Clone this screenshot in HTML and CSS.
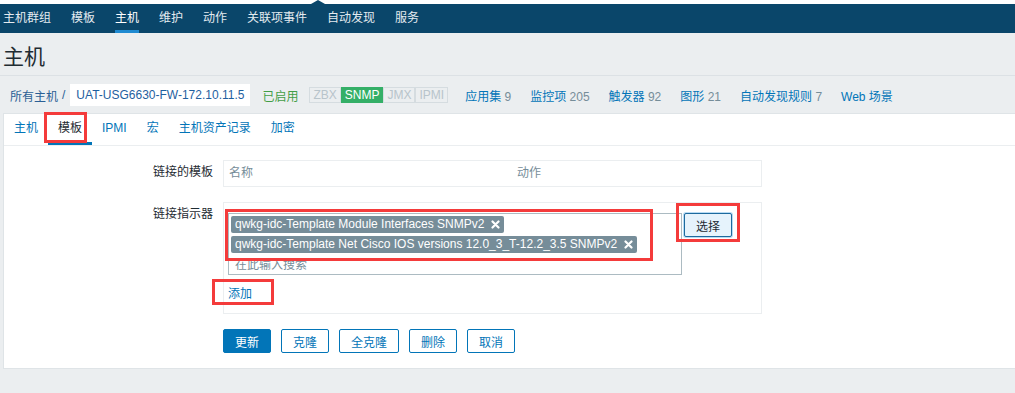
FILE: index.html
```html
<!DOCTYPE html>
<html>
<head>
  <title>主机</title>
  <link rel="stylesheet" href="styles.css">
</head>
<body>
  <nav class="topbar">
    <ul class="top-nav">
      <li>主机群组</li>
      <li>模板</li>
      <li class="selected">主机</li>
      <li>维护</li>
      <li>动作</li>
      <li>关联项事件</li>
      <li>自动发现</li>
      <li>服务</li>
    </ul>
  </nav>

  <header class="page-header">
    <h1>主机</h1>
  </header>

  <!-- host breadcrumbs and related objects -->
  <div class="host-bar">
    <a class="crumb">所有主机</a>
    <span class="sep">/</span>
    <span class="crumb-current">UAT-USG6630-FW-172.10.11.5</span>
    <span class="status-on">已启用</span>
    <span class="avail">
      <span class="avail-item">ZBX</span>
      <span class="avail-item on">SNMP</span>
      <span class="avail-item">JMX</span>
      <span class="avail-item">IPMI</span>
    </span>
    <ul class="host-links">
      <li><a>应用集</a> <span class="count">9</span></li>
      <li><a>监控项</a> <span class="count">205</span></li>
      <li><a>触发器</a> <span class="count">92</span></li>
      <li><a>图形</a> <span class="count">21</span></li>
      <li><a>自动发现规则</a> <span class="count">7</span></li>
      <li><a>Web 场景</a></li>
    </ul>
  </div>

  <main class="panel">
    <ul class="tabs">
      <li>主机</li>
      <li class="active">模板</li>
      <li>IPMI</li>
      <li>宏</li>
      <li>主机资产记录</li>
      <li>加密</li>
    </ul>

    <div class="form">
      <label class="form-label">链接的模板</label>
      <div class="linked-table">
        <span class="col-name">名称</span>
        <span>动作</span>
      </div>

      <label class="form-label">链接指示器</label>
      <div class="link-box">
        <div class="ms-row">
          <div class="multiselect">
            <span class="chip">qwkg-idc-Template Module Interfaces SNMPv2
              <svg class="chip-x" width="9" height="9" viewBox="0 0 9 9"><path d="M1.5 1.5L7.5 7.5M7.5 1.5L1.5 7.5" stroke="#fff" stroke-width="2.2" stroke-linecap="round"/></svg>
            </span>
            <span class="chip">qwkg-idc-Template Net Cisco IOS versions 12.0_3_T-12.2_3.5 SNMPv2
              <svg class="chip-x" width="9" height="9" viewBox="0 0 9 9"><path d="M1.5 1.5L7.5 7.5M7.5 1.5L1.5 7.5" stroke="#fff" stroke-width="2.2" stroke-linecap="round"/></svg>
            </span>
            <span class="ms-input">在此输入搜索</span>
          </div>
          <button class="btn-select">选择</button>
        </div>
        <a class="add-link">添加</a>
      </div>

      <div class="form-buttons">
        <button class="btn btn-main">更新</button>
        <button class="btn">克隆</button>
        <button class="btn">全克隆</button>
        <button class="btn">删除</button>
        <button class="btn">取消</button>
      </div>
    </div>

    <!-- red annotation frames -->
    <span class="mark mark-tab"></span>
    <span class="mark mark-chips"></span>
    <span class="mark mark-select"></span>
    <span class="mark mark-add"></span>
  </main>
</body>
</html>
```

FILE: styles.css
```css
:root {
  --nav-bg: #0a466a;
  --page-bg: #ebeef0;
  --link: #0275b8;
  --text: #1f2c33;
  --muted: #768d99;
  --line: #dfe4e7;
  --mark: #f43b3b;
}

body {
  margin: 0;
  background-color: var(--page-bg);
  font-family: "Liberation Sans", "Noto Sans CJK SC", sans-serif;
  font-size: 12px;
  color: var(--text);
}

ul {
  list-style: none;
  margin: 0;
  padding: 0;
}

/* Top navigation */
.topbar {
  position: relative;
  border-top: 4px solid #ffffff;
  background-color: var(--nav-bg);
  height: 29px;
}

.topbar::before {
  content: "";
  position: absolute;
  top: -4px;
  left: 311px;
  border-left: 7px solid transparent;
  border-right: 7px solid transparent;
  border-bottom: 4px solid var(--nav-bg);
}

.top-nav {
  display: flex;
  padding-left: 3px;
}

.top-nav li {
  margin-right: 20px;
  padding-top: 3px;
  line-height: 23px;
  border-bottom: 3px solid transparent;
  color: #e4ebf0;
}

.top-nav li.selected {
  color: #ffffff;
  border-bottom-color: #1f8ad1;
}

/* Page title */
.page-header {
  padding: 12px 0 6px 3px;
  border-bottom: 1px solid #dce1e5;
}

.page-header h1 {
  margin: 0;
  font-size: 21px;
  font-weight: normal;
  line-height: 24px;
}

/* Host bar */
.host-bar {
  display: flex;
  align-items: center;
  height: 22px;
  padding: 8px 0 7px 10px;
}

.crumb {
  color: #2a5f95;
}

.sep {
  margin: 0 5px 0 4px;
  color: #2a5f95;
}

.crumb-current {
  background-color: #ffffff;
  color: #1f5f9f;
  padding: 0 6px;
  line-height: 22px;
}

.status-on {
  margin-left: 12px;
  color: #429e47;
}

.avail {
  display: flex;
  margin-left: 11px;
}

.avail-item {
  border: 1px solid #d5dce0;
  color: #b8c4cb;
  line-height: 14px;
  padding: 0 3px;
}

.avail-item.on {
  background-color: #34af67;
  border-color: #34af67;
  color: #ffffff;
}

.host-links {
  display: flex;
  margin-left: 17px;
  gap: 19px;
}

.host-links a {
  color: var(--link);
}

.count {
  color: var(--muted);
}

/* Main panel */
.panel {
  position: relative;
  margin-left: 3px;
  background-color: #ffffff;
  border: 1px solid var(--line);
  border-right: none;
}

.tabs {
  display: flex;
  height: 31px;
  border-bottom: 1px solid var(--page-bg);
}

.tabs li {
  padding: 0 10px;
  line-height: 28px;
  border-bottom: 3px solid transparent;
  color: var(--link);
}

.tabs li.active {
  color: var(--text);
  border-bottom-color: var(--link);
}

.form {
  display: grid;
  grid-template-columns: 209px 539px;
  column-gap: 10px;
  row-gap: 15px;
  padding: 14px 0 15px;
}

.form-label {
  text-align: right;
  padding-top: 5px;
  line-height: 14px;
}

.linked-table {
  display: flex;
  border: 1px solid var(--page-bg);
  padding: 5px;
  line-height: 15px;
  color: var(--muted);
}

.col-name {
  width: 288px;
}

.link-box {
  border: 1px solid var(--page-bg);
  padding: 10px 4px 11px;
}

.ms-row {
  display: flex;
  align-items: flex-start;
}

.multiselect {
  width: 448px;
  height: 56px;
  border: 1px solid #acbbc2;
  padding: 2px;
  display: flex;
  flex-direction: column;
  align-items: flex-start;
  gap: 3px;
}

.chip {
  display: flex;
  align-items: center;
  background-color: var(--muted);
  color: #ffffff;
  border-radius: 2px;
  line-height: 17px;
  padding: 0 4px;
}

.chip-x {
  margin-left: 7px;
}

.ms-input {
  line-height: 19px;
  padding-left: 4px;
  color: var(--muted);
}

.btn-select {
  margin-left: 2px;
  height: 24px;
  padding: 0 11px;
  font: inherit;
  color: var(--text);
  background-color: #e6f3fc;
  border: 1px solid #1d6a9e;
  border-radius: 2px;
  box-shadow: 0 0 0 1px #b8dbf3;
}

.add-link {
  display: block;
  margin-top: 12px;
  line-height: 15px;
  color: var(--link);
}

.form-buttons {
  grid-column: 2;
  display: flex;
  gap: 10px;
}

.btn {
  height: 24px;
  padding: 0 11px;
  font: inherit;
  color: var(--link);
  background-color: #ffffff;
  border: 1px solid var(--link);
  border-radius: 2px;
}

.btn-main {
  background-color: var(--link);
  color: #ffffff;
}

/* Annotation frames */
.mark {
  position: absolute;
  border: 3px solid var(--mark);
  box-sizing: border-box;
}

.mark-tab {
  left: 40px;
  top: -2px;
  width: 43px;
  height: 31px;
}

.mark-chips {
  left: 221px;
  top: 95px;
  width: 428px;
  height: 52px;
}

.mark-select {
  left: 672px;
  top: 89px;
  width: 64px;
  height: 39px;
}

.mark-add {
  left: 208px;
  top: 165px;
  width: 62px;
  height: 26px;
}
```
